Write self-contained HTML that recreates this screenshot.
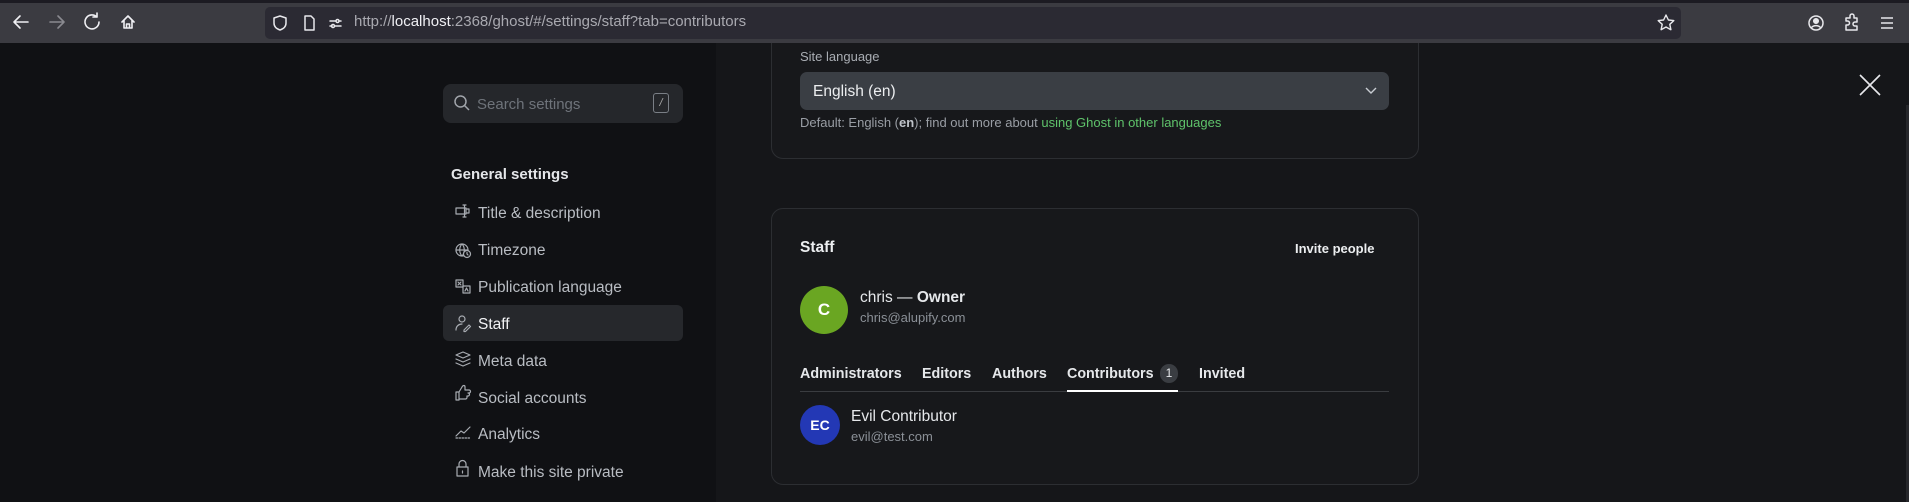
<!DOCTYPE html>
<html><head><meta charset="utf-8">
<style>
*{margin:0;padding:0;box-sizing:border-box}
body{width:1909px;height:502px;overflow:hidden;background:#151619;font-family:"Liberation Sans",Arial,sans-serif;position:relative}
.abs{position:absolute}
.top{left:0;top:0;width:1909px;height:3px;background:#1c1b22;z-index:5}
.tb{left:0;top:3px;width:1909px;height:40px;background:#3b3b41;z-index:5}
.z{z-index:6}
.url{left:265px;top:7px;width:1416px;height:32px;background:#2b2a33;border-radius:5px}
.urltext{left:354px;top:13px;font-size:15px;color:#a9a9b0;white-space:nowrap}
.urltext b{color:#f0f0f4;font-weight:normal}
.side{left:0;top:43px;width:716px;height:459px;background:#101114}
.main{left:716px;top:43px;width:1193px;height:459px;background:#151619}
.search{left:443px;top:84px;width:240px;height:39px;background:#25272b;border-radius:8px}
.stxt{left:477px;top:96px;font-size:15px;color:#6e737a}
.kbd{left:653px;top:93px;width:16px;height:20px;border:1px solid #7a7f86;border-radius:3px;color:#aaa;font-size:11px;text-align:center;line-height:18px;font-style:italic}
.gs{left:451px;top:166px;font-size:15px;font-weight:bold;color:#e4e6e9}
.item{left:478px;font-size:15.5px;color:#b9bdc3}
.hl{left:443px;top:305px;width:240px;height:36px;background:#26282c;border-radius:6px}
.card{border:1px solid #2c2e32;border-radius:12px;background:#17181b}
.lbl{font-size:13px;color:#a9adb3}
.sel{left:800px;top:72px;width:589px;height:38px;background:#3a3e44;border-radius:7px}
.help{left:800px;top:115px;font-size:13px;color:#9a9ea5;white-space:nowrap}
.help a{color:#5fc36b;text-decoration:none}
.tab{top:366px;font-size:14.3px;font-weight:bold;color:#e6e8eb}
</style></head><body>
<div class="abs side"></div>
<div class="abs main"></div>
<div class="abs card" style="left:771px;top:-20px;width:648px;height:179px"></div>

<div class="abs top"></div>
<div class="abs tb"></div>
<svg class="abs z" style="left:0;top:3px" width="160" height="40" fill="none" stroke-width="1.6" stroke-linecap="round" stroke-linejoin="round">
<path d="M28 19H14M20 13l-6 6 6 6" stroke="#f0f0f4"/>
<path d="M50 19h14M58 13l6 6-6 6" stroke="#8a8a90"/>
<path d="M97 14a7 7 0 1 0 2 5M97 10v4h-4" stroke="#f0f0f4"/>
<path d="M122 19l6-6 6 6M124 17v8h8v-8M126.5 25v-4h3v4" stroke="#f0f0f4"/>
</svg>
<div class="abs url z"></div>
<svg class="abs z" style="left:265px;top:7px" width="100" height="32" fill="none" stroke="#e8e8ec" stroke-width="1.5" stroke-linejoin="round">
<path d="M15 9l6 2v5c0 4-3 6-6 7-3-1-6-3-6-7v-5z"/>
<path d="M40 9h6l3 3v11h-9z"/>
<path d="M65 14h6M74 14h2M65 19h2M70 19h6" stroke-linecap="round"/><circle cx="72.5" cy="14" r="1.5"/><circle cx="68" cy="19" r="1.5"/>
</svg>
<div class="abs urltext z">http://<b>localhost</b>:2368/ghost/#/settings/staff?tab=contributors</div>
<svg class="abs z" style="left:1655px;top:12px" width="22" height="22" fill="none" stroke="#e8e8ec" stroke-width="1.4" stroke-linejoin="round"><path d="M11 3l2.4 5 5.4.6-4 3.7 1.1 5.4L11 15l-4.9 2.7 1.1-5.4-4-3.7 5.4-.6z"/></svg>
<svg class="abs z" style="left:1800px;top:10px" width="105" height="26" fill="none" stroke="#e8e8ec" stroke-width="1.5">
<circle cx="16" cy="13" r="7"/><circle cx="16" cy="11" r="2.3" fill="#e8e8ec"/><path d="M11.5 17.5c2.5-2.5 6.5-2.5 9 0" />
<path d="M46 8h4v-2a2 2 0 0 1 4 0v2h3v4h-2a2 2 0 0 0 0 4h2v4h-11v-5h1.5a2 2 0 0 0 0-4H46z" stroke-linejoin="round"/>
<path d="M81 8h12M81 13h12M81 18h12"/>
</svg>

<div class="abs search"></div>
<svg class="abs" style="left:453px;top:94px" width="18" height="18" fill="none" stroke="#a0a4aa" stroke-width="1.5"><circle cx="7.5" cy="7.5" r="5.5"/><path d="M11.5 11.5l4.5 4.5"/></svg>
<div class="abs stxt">Search settings</div>
<div class="abs kbd">/</div>
<div class="abs gs">General settings</div>
<div class="abs hl"></div>
<svg class="abs" style="left:454px;top:200px" width="20" height="280" fill="none" stroke="#a8acb2" stroke-width="1.2" stroke-linejoin="round" stroke-linecap="round">
<path d="M2 8h10v6H2zM12 9h3v4h-3M9 5h3M9 17h3M10.5 5v12"/>
<circle cx="8" cy="50" r="6"/><path d="M2 50h12M8 44c-3 3-3 9 0 12M8 44c3 3 3 9 0 12"/><circle cx="13" cy="54" r="3.5" fill="#101114"/><path d="M13 52.5v1.5l1 1"/>
<rect x="2" y="80" width="7" height="7"/><rect x="9" y="86" width="7" height="7"/><path d="M4 82l3 3M7 82l-3 3M11 91l1.5-3 1.5 3"/>
<circle cx="8" cy="119" r="3"/><path d="M2 130c0-4 3-6 6-6M10 130l5-5 1.5 1.5-5 5H10z"/>
<path d="M9 152l7 3-7 3-7-3zM2 159l7 3 7-3M2 163l7 3 7-3"/>
<path d="M2 192h3v8H2zM5 192l3-5c1-2 3-2 3 0v3h4a1.5 1.5 0 0 1 0 3h-1a1.5 1.5 0 0 1 0 3h-1v1.5a1.5 1.5 0 0 1-1.5 1.5H5"/>
<path d="M2 238h14" stroke-dasharray="1.5 1.5"/><path d="M2 236l5-5 3 2 6-6"/>
<rect x="3" y="267" width="11" height="9"/><path d="M5 267v-3a3.5 3.5 0 0 1 7 0v3M8.5 271v2"/>
</svg>
<div class="abs item" style="top:205px">Title &amp; description</div>
<div class="abs item" style="top:242px">Timezone</div>
<div class="abs item" style="top:279px">Publication language</div>
<div class="abs item" style="top:316px;color:#f2f3f5">Staff</div>
<div class="abs item" style="top:353px">Meta data</div>
<div class="abs item" style="top:390px">Social accounts</div>
<div class="abs item" style="top:426px">Analytics</div>
<div class="abs item" style="top:464px">Make this site private</div>

<div class="abs lbl" style="left:800px;top:49px">Site language</div>
<div class="abs sel"></div>
<div class="abs" style="left:813px;top:83px;font-size:15.5px;color:#eceef0">English (en)</div>
<svg class="abs" style="left:1364px;top:85px" width="14" height="12" fill="none" stroke="#c8ccd2" stroke-width="1.4"><path d="M2 3l5 5 5-5"/></svg>
<div class="abs help">Default: English (<b style="color:#c0c4ca">en</b>); find out more about <a>using Ghost in other languages</a></div>

<div class="abs card" style="left:771px;top:208px;width:648px;height:277px"></div>
<div class="abs" style="left:800px;top:239px;font-size:15.5px;font-weight:bold;color:#eceef0">Staff</div>
<div class="abs" style="left:1295px;top:241px;font-size:13px;font-weight:bold;color:#eceef0">Invite people</div>
<div class="abs" style="left:800px;top:286px;width:48px;height:48px;border-radius:50%;background:#6aa622;color:#fff;font-weight:bold;font-size:17px;text-align:center;line-height:48px">C</div>
<div class="abs" style="left:860px;top:289px;font-size:15.5px;color:#e6e8eb">chris — <b>Owner</b></div>
<div class="abs" style="left:860px;top:310px;font-size:13px;color:#8b9097">chris@alupify.com</div>
<div class="abs tab" style="left:800px">Administrators</div>
<div class="abs tab" style="left:922px">Editors</div>
<div class="abs tab" style="left:992px">Authors</div>
<div class="abs tab" style="left:1067px">Contributors</div>
<div class="abs" style="left:1160px;top:364px;width:18px;height:19px;border-radius:9px;background:#3a3d42;color:#e6e8eb;font-size:12px;text-align:center;line-height:19px">1</div>
<div class="abs tab" style="left:1199px">Invited</div>
<div class="abs" style="left:800px;top:391px;width:589px;height:1px;background:#3a3c40"></div>
<div class="abs" style="left:1067px;top:390px;width:111px;height:2px;background:#fff"></div>
<div class="abs" style="left:800px;top:405px;width:40px;height:40px;border-radius:50%;background:#2338b5;color:#fff;font-weight:bold;font-size:14px;text-align:center;line-height:40px">EC</div>
<div class="abs" style="left:851px;top:408px;font-size:15.5px;color:#e6e8eb">Evil Contributor</div>
<div class="abs" style="left:851px;top:429px;font-size:13px;color:#8b9097">evil@test.com</div>
<svg class="abs" style="left:1858px;top:73px" width="24" height="24" stroke="#e8e8ec" stroke-width="1.6"><path d="M2 2l20 20M22 2L2 22"/></svg>
<div class="abs" style="left:1906px;top:105px;width:3px;height:397px;background:#26272b"></div>
</body></html>
